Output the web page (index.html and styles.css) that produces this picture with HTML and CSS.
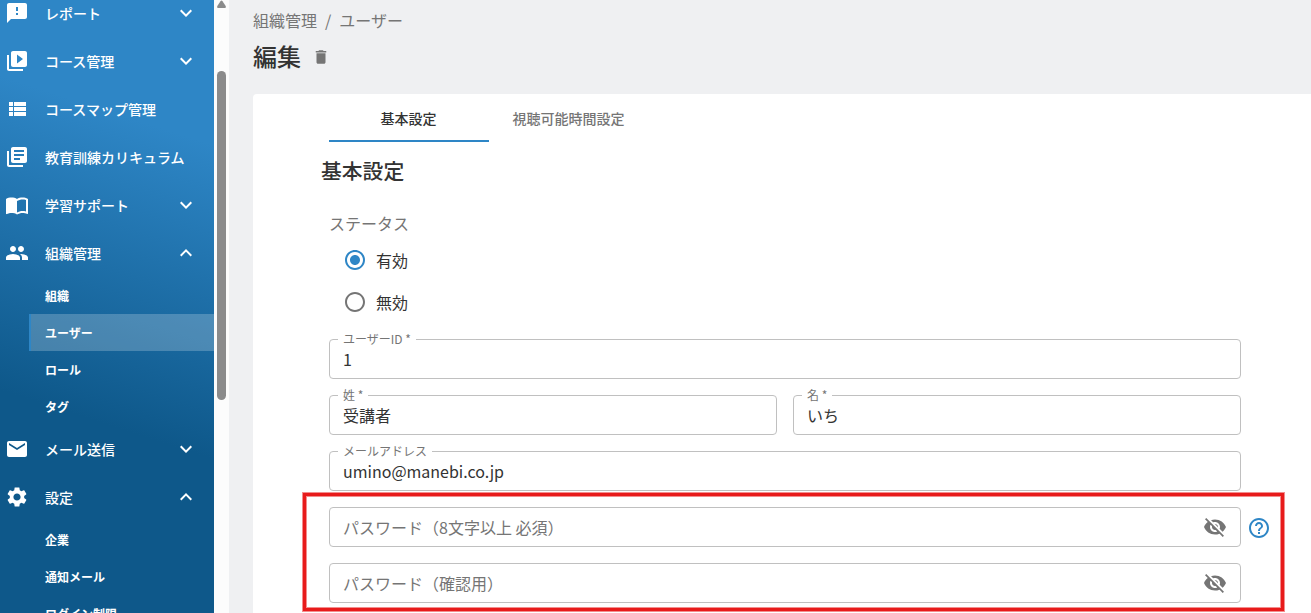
FILE: index.html
```html
<!DOCTYPE html>
<html lang="ja">
	<head>
		<meta charset="utf-8">
		<title>編集</title>
		<link rel="stylesheet" href="styles.css">
	</head>
	<body>
		<div class="sidebar">
			<ul class="menu">
				<li class="item">
					<svg class="icon" viewBox="0 0 24 24"><path d="M20 2H4c-1.1 0-1.99.9-1.99 2L2 22l4-4h14c1.1 0 2-.9 2-2V4c0-1.1-.9-2-2-2zm-7 12h-2v-2h2v2zm0-4h-2V6h2v4z"/></svg>
					<span>レポート</span>
					<svg class="arrow" viewBox="0 0 24 24"><path d="M7.41 8.59 12 13.17l4.59-4.58L18 10l-6 6-6-6z"/></svg>
				</li>
				<li class="item">
					<svg class="icon" viewBox="0 0 24 24"><path d="M4 6H2v14c0 1.1.9 2 2 2h14v-2H4V6zm16-4H8c-1.1 0-2 .9-2 2v12c0 1.1.9 2 2 2h12c1.1 0 2-.9 2-2V4c0-1.1-.9-2-2-2zm-8 12.5v-9l6 4.500z"/></svg>
					<span>コース管理</span>
					<svg class="arrow" viewBox="0 0 24 24"><path d="M7.41 8.59 12 13.17l4.59-4.58L18 10l-6 6-6-6z"/></svg>
				</li>
				<li class="item">
					<svg class="icon" viewBox="0 0 24 24"><path d="M4 14h4v-4H4v4zm0 5h4v-4H4v4zM4 9h4V5H4v4zm5 5h12v-4H9v4zm0 5h12v-4H9v4zM9 5v4h12V5H9z"/></svg>
					<span>コースマップ管理</span>
				</li>
				<li class="item">
					<svg class="icon" viewBox="0 0 24 24"><path d="M4 6H2v14c0 1.100.9 2 2 2h14v-2H4V6zm16-4H8c-1.1 0-2 .9-2 2v12c0 1.1.9 2 2 2h12c1.1 0 2-.9 2-2V4c0-1.1-.9-2-2-2zm-1 9H9V9h10v2zm-4 4H9v-2h6v2zm4-8H9V5h10v2z"/></svg>
					<span>教育訓練カリキュラム</span>
				</li>
				<li class="item">
					<svg class="icon" viewBox="0 0 24 24"><path d="M21 5c-1.110-.35-2.330-.5-3.500-.5-1.950 0-4.050.4-5.500 1.500-1.450-1.100-3.550-1.500-5.500-1.500S2.450 4.900 1 6v14.650c0 .25.25.5.5.5.1 0 .15-.05.25-.05C3.100 20.450 5.050 20 6.500 20c1.950 0 4.050.4 5.500 1.500 1.350-.85 3.800-1.500 5.500-1.500 1.650 0 3.350.3 4.750 1.050.1.050.150.050.250.050.250 0 .5-.25.5-.5V6c-.6-.45-1.250-.75-2-1zm0 13.500c-1.100-.35-2.300-.5-3.500-.5-1.700 0-4.150.65-5.500 1.500V8c1.350-.85 3.800-1.500 5.500-1.500 1.200 0 2.400.15 3.500.5v11.500z"/></svg>
					<span>学習サポート</span>
					<svg class="arrow" viewBox="0 0 24 24"><path d="M7.41 8.59 12 13.17l4.59-4.58L18 10l-6 6-6-6z"/></svg>
				</li>
				<li class="item">
					<svg class="icon" viewBox="0 0 24 24"><path d="M16 11c1.660 0 2.990-1.340 2.990-3S17.660 5 16 5s-3 1.340-3 3 1.340 3 3 3zm-8 0c1.660 0 2.990-1.340 2.990-3S9.660 5 8 5 5 6.340 5 8s1.340 3 3 3zm0 2c-2.330 0-7 1.170-7 3.500V19h14v-2.500c0-2.330-4.670-3.500-7-3.500zm8 0c-.29 0-.62.02-.97.05 1.160.84 1.970 1.970 1.970 3.450V19h6v-2.500c0-2.330-4.670-3.500-7-3.500z"/></svg>
					<span>組織管理</span>
					<svg class="arrow" viewBox="0 0 24 24"><path d="m12 8-6 6 1.410 1.410L12 10.830l4.590 4.580L18 14z"/></svg>
				</li>
				<li class="sub">組織</li>
				<li class="sub active">ユーザー</li>
				<li class="sub">ロール</li>
				<li class="sub">タグ</li>
				<li class="item">
					<svg class="icon" viewBox="0 0 24 24"><path d="M20 4H4c-1.100 0-1.990.9-1.990 2L2 18c0 1.100.9 2 2 2h16c1.100 0 2-.9 2-2V6c0-1.100-.9-2-2-2zm0 4-8 5-8-5V6l8 5 8-5v2z"/></svg>
					<span>メール送信</span>
					<svg class="arrow" viewBox="0 0 24 24"><path d="M7.41 8.59 12 13.17l4.59-4.58L18 10l-6 6-6-6z"/></svg>
				</li>
				<li class="item">
					<svg class="icon" viewBox="0 0 24 24"><path d="M19.14 12.94c.04-.3.06-.61.06-.94 0-.32-.02-.64-.07-.94l2.030-1.580c.18-.14.23-.41.12-.61l-1.920-3.320c-.12-.22-.37-.29-.59-.22l-2.390.96c-.5-.38-1.030-.7-1.620-.94l-.36-2.540c-.04-.24-.24-.41-.48-.41h-3.840c-.24 0-.43.17-.47.41l-.36 2.540c-.59.24-1.130.57-1.620.94l-2.390-.96c-.22-.08-.47 0-.59.22L2.740 8.870c-.12.21-.08.47.12.61l2.030 1.580c-.05.3-.09.63-.09.94s.02.64.07.94l-2.030 1.580c-.18.14-.23.41-.12.61l1.920 3.320c.12.22.37.29.59.22l2.390-.96c.5.38 1.030.7 1.620.94l.36 2.540c.05.24.24.41.48.41h3.840c.24 0 .44-.17.47-.41l.36-2.540c.59-.24 1.130-.56 1.620-.94l2.390.96c.22.08.47 0 .59-.22l1.920-3.320c.12-.22.07-.47-.12-.61l-2.010-1.580zM12 15.600c-1.980 0-3.600-1.620-3.600-3.600s1.620-3.600 3.600-3.600 3.600 1.620 3.600 3.600-1.620 3.600-3.600 3.600z"/></svg>
					<span>設定</span>
					<svg class="arrow" viewBox="0 0 24 24"><path d="m12 8-6 6 1.410 1.410L12 10.830l4.590 4.580L18 14z"/></svg>
				</li>
				<li class="sub">企業</li>
				<li class="sub">通知メール</li>
				<li class="sub">ログイン制限</li>
			</ul>
		</div>
		<div class="scrollbar">
			<svg class="scroll-up" viewBox="0 0 9 8"><path d="M3.500 1.200Q4.500 0 5.500 1.200L8.700 6Q9.300 8 8 8H1Q-.3 8 .3 6z"/></svg>
			<div class="thumb"></div>
		</div>
		<div class="main">
			<div class="breadcrumb"><span>組織管理</span><span>/</span><span>ユーザー</span></div>
			<div class="title">
				<h1>編集</h1>
				<svg class="trash" viewBox="0 0 24 24"><path d="M6 19c0 1.100.9 2 2 2h8c1.100 0 2-.9 2-2V7H6v12zM19 4h-3.500l-1-1h-5l-1 1H5v2h14V4z"/></svg>
			</div>
			<div class="card">
				<div class="tabs">
					<div class="tab selected">基本設定</div>
					<div class="tab">視聴可能時間設定</div>
				</div>
				<h2>基本設定</h2>
				<div class="form">
					<p class="status">ステータス</p>
					<div class="radio">
						<svg class="radio-on" viewBox="0 0 24 24"><path d="M12 7c-2.760 0-5 2.240-5 5s2.240 5 5 5 5-2.240 5-5-2.240-5-5-5zm0-5C6.480 2 2 6.480 2 12s4.480 10 10 10 10-4.480 10-10S17.520 2 12 2zm0 18c-4.420 0-8-3.580-8-8s3.580-8 8-8 8 3.580 8 8-3.580 8-8 8z"/></svg>
						<span>有効</span>
					</div>
					<div class="radio">
						<svg viewBox="0 0 24 24"><path d="M12 2C6.480 2 2 6.480 2 12s4.480 10 10 10 10-4.480 10-10S17.520 2 12 2zm0 18c-4.420 0-8-3.580-8-8s3.580-8 8-8 8 3.580 8 8-3.580 8-8 8z"/></svg>
						<span>無効</span>
					</div>
					<div class="fields">
						<fieldset class="wide"><legend>ユーザーID *</legend><span>1</span></fieldset>
						<fieldset><legend>姓 *</legend><span>受講者</span></fieldset>
						<fieldset><legend>名 *</legend><span>いち</span></fieldset>
						<fieldset class="wide"><legend>メールアドレス</legend><span>umino@manebi.co.jp</span></fieldset>
						<div class="password wide">
							<span>パスワード（8文字以上 必須）</span>
							<svg viewBox="0 0 24 24"><path d="M12 7c2.760 0 5 2.240 5 5 0 .65-.13 1.260-.36 1.830l2.920 2.920c1.510-1.260 2.700-2.890 3.430-4.750-1.730-4.390-6-7.500-11-7.500-1.400 0-2.740.25-3.980.7l2.160 2.160C10.740 7.130 11.350 7 12 7zM2 4.270l2.280 2.280.46.46C3.080 8.300 1.780 10.020 1 12c1.730 4.390 6 7.500 11 7.500 1.550 0 3.030-.3 4.380-.84l.42.42L19.730 22 21 20.730 3.270 3 2 4.270zM7.530 9.800l1.550 1.550c-.05.21-.08.43-.08.65 0 1.660 1.340 3 3 3 .22 0 .44-.03.65-.08l1.550 1.550c-.67.33-1.410.53-2.200.53-2.760 0-5-2.240-5-5 0-.79.2-1.530.53-2.200zm4.310-.78 3.150 3.150.02-.16c0-1.660-1.340-3-3-3l-.17.01z"/></svg>
						</div>
						<div class="help">
							<svg viewBox="0 0 24 24"><path d="M11 18h2v-2h-2v2zm1-16C6.480 2 2 6.480 2 12s4.480 10 10 10 10-4.480 10-10S17.520 2 12 2zm0 18c-4.410 0-8-3.590-8-8s3.590-8 8-8 8 3.590 8 8-3.590 8-8 8zm0-14c-2.210 0-4 1.790-4 4h2c0-1.100.9-2 2-2s2 .9 2 2c0 2-3 1.750-3 5h2c0-2.250 3-2.500 3-5 0-2.210-1.790-4-4-4z"/></svg>
						</div>
						<div class="password wide">
							<span>パスワード（確認用）</span>
							<svg viewBox="0 0 24 24"><path d="M12 7c2.760 0 5 2.240 5 5 0 .65-.13 1.260-.36 1.830l2.920 2.920c1.510-1.260 2.700-2.890 3.430-4.750-1.730-4.390-6-7.500-11-7.500-1.400 0-2.740.25-3.980.7l2.160 2.160C10.740 7.130 11.350 7 12 7zM2 4.270l2.280 2.280.46.46C3.080 8.300 1.780 10.020 1 12c1.730 4.390 6 7.500 11 7.500 1.550 0 3.030-.3 4.380-.84l.42.42L19.730 22 21 20.730 3.270 3 2 4.270zM7.530 9.800l1.550 1.550c-.05.21-.08.43-.08.65 0 1.660 1.340 3 3 3 .22 0 .44-.03.65-.08l1.550 1.550c-.67.33-1.410.53-2.200.53-2.760 0-5-2.240-5-5 0-.79.2-1.530.53-2.200zm4.310-.78 3.150 3.150.02-.16c0-1.660-1.340-3-3-3l-.17.01z"/></svg>
						</div>
					</div>
				</div>
			</div>
		</div>
		<div class="highlight"></div>
	</body>
</html>
```
FILE: styles.css
```css
* {
	box-sizing: border-box;
}
body {
	margin: 0;
	display: flex;
	height: 613px;
	overflow: hidden;
	background: #eff0f2;
	color: #333;
	font-family: "Noto Sans CJK JP", sans-serif;
	font-size: 16px;
	line-height: 24px;
}
h1, h2, p, ul {
	margin: 0;
	padding: 0;
}
svg {
	display: block;
	flex: none;
	width: 24px;
	height: 24px;
	fill: currentColor;
}

/* sidebar */
.sidebar {
	flex: none;
	width: 214px;
	overflow: hidden;
	background: linear-gradient(198deg, #2e86c6 138px, #0e588a 437px);
	color: #fff;
}
.menu {
	margin-top: -11px; /* scrolled a little */
	list-style: none;
}
.item {
	display: flex;
	align-items: center;
	height: 48px;
	padding: 0 16px 0 5px;
	font-size: 14px;
	font-weight: 500;
}
.item span {
	flex: 1;
	padding: 0 0 1px 16px;
	white-space: nowrap;
}
.sub {
	height: 37px;
	margin-left: 29px;
	padding-left: 16px;
	font-size: 12px;
	font-weight: bold;
	line-height: 37px;
}
.active {
	padding-left: 14px;
	border-left: 2px solid #2e86c6;
	background: rgba(255, 255, 255, 0.22);
}
.scrollbar {
	display: flex;
	flex: none;
	flex-direction: column;
	align-items: center;
	width: 15px;
	background: #fcfcfc;
	color: #8b8b8b;
}
.scroll-up {
	width: 9px;
	height: 8px;
}
.thumb {
	width: 9px;
	height: 329px;
	margin-top: 63px;
	border-radius: 5px;
	background: #8b8b8b;
}

/* page */
.main {
	display: flex;
	flex: 1;
	flex-direction: column;
	padding: 8px 0 0 24px;
}
.breadcrumb {
	display: flex;
	gap: 8px;
	color: #757575;
}
.title {
	display: flex;
	align-items: center;
	gap: 10px;
	height: 48px;
}
h1 {
	font-size: 24px;
	font-weight: 500;
}
.trash {
	width: 20px;
	height: 18px;
	margin-top: 2px;
	color: #757575;
}
.card {
	flex: 1;
	margin-top: 14px;
	padding: 0 70px 0 76px;
	border-top-left-radius: 4px;
	background: #fff;
}
.tabs {
	display: flex;
}
.tab {
	width: 160px;
	height: 48px;
	padding-right: 1px;
	font-size: 14px;
	font-weight: 500;
	line-height: 48px;
	text-align: center;
	color: #757575;
}
.selected {
	border-bottom: 2px solid #2e86c6;
	color: #333;
}
h2 {
	margin: 12px 0 0 -8px;
	font-size: 20.8px;
	font-weight: 500;
	line-height: 32px;
}
.status {
	margin-top: 25px;
	color: #757575;
}
.radio {
	display: flex;
	align-items: center;
	gap: 9px;
	height: 42px;
	padding-left: 14px;
}
.radio:first-of-type {
	margin-top: 4px;
}
.radio svg {
	color: #757575;
}
.radio .radio-on {
	color: #2e86c6;
}
.fields {
	display: grid;
	grid-template-columns: 448px 448px;
	gap: 16px;
	margin-top: 16px;
	position: relative;
}
.wide {
	grid-column: 1 / span 2;
}
fieldset {
	height: 46px;
	margin: -6px 0 0;
	padding: 0 8px;
	border: 1px solid #c0c0c0;
	border-radius: 4px;
	line-height: 28px;
}
fieldset span {
	display: block;
	padding-left: 5px;
}
legend {
	height: 12px;
	padding: 0 5px;
	font-size: 12px;
	line-height: 12px;
	color: #757575;
}
.password {
	display: flex;
	align-items: center;
	justify-content: space-between;
	height: 40px;
	padding: 0 13px;
	border: 1px solid #c0c0c0;
	border-radius: 4px;
	color: #757575;
}
.help {
	position: absolute;
	top: 177px;
	left: 918px;
	color: #2e86c6;
}
.highlight {
	position: absolute;
	top: 493px;
	left: 303px;
	width: 981px;
	height: 118px;
	border: 3px solid #e81b1b;
	box-shadow: 0 0 0 1px rgba(232, 27, 27, 0.5), inset 0 0 0 1px rgba(232, 27, 27, 0.5);
}
```
